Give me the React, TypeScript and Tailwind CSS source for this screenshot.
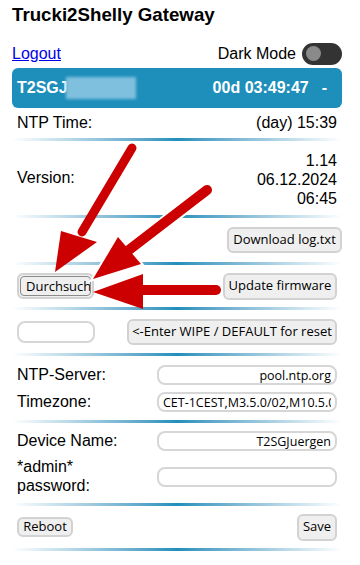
import React from 'react';

function Divider() {
  return <div className="h-[3px] bg-linear-to-r from-white via-[#1e8fbb] to-white" />;
}

function Btn({ children, className = '' }: { children: React.ReactNode; className?: string }) {
  return (
    <button
      className={`inline-flex items-center justify-center whitespace-nowrap rounded-[6px] border-2 border-[#d2d2d2] bg-[#efefef] px-[5px] font-['Open_Sans',sans-serif] text-[13px] text-black ${className}`}
    >
      {children}
    </button>
  );
}

function Field({ value = '' }: { value?: string }) {
  return (
    <input
      readOnly
      value={value}
      className="h-[20px] w-[180px] rounded-[8px] border-2 border-[#d6d6d6] bg-white px-[4px] text-right font-['Open_Sans',sans-serif] text-[12.5px] text-black outline-none"
    />
  );
}

function Arrows() {
  return (
    <svg className="pointer-events-none absolute left-0 top-0" width="360" height="565" viewBox="0 0 360 565">
      <g fill="#cc0000" stroke="white" strokeWidth="2" strokeLinejoin="miter" style={{ paintOrder: 'stroke' }}>
        {/* arrow 3 (horizontal) */}
        <line x1="216" y1="290" x2="135" y2="290" stroke="#cc0000" strokeWidth="10" strokeLinecap="round" />
        <polygon points="93,292 143,274 143,309" stroke="none" />
        {/* arrow 1 */}
        <line x1="132" y1="148" x2="82" y2="232" stroke="#cc0000" strokeWidth="9" strokeLinecap="round" />
        <polygon points="55,272 61,231 97,242" stroke="none" />
        {/* arrow 2 */}
        <line x1="207" y1="190" x2="128" y2="251" stroke="white" strokeWidth="14" strokeLinecap="round" />
        <polygon points="93,279 118,237 141,264" strokeWidth="4" />
        <line x1="207" y1="190" x2="125" y2="253" stroke="#cc0000" strokeWidth="10" strokeLinecap="round" />
      </g>
    </svg>
  );
}

export default function App() {
  return (
    <div className="relative min-h-[565px] w-[360px] bg-white font-['Liberation_Sans',Arial,sans-serif] text-[16px] text-black">
      <div className="pl-3 pr-[18px]">
        <h3 className="pt-[4px] text-[18.72px] font-bold leading-[21px]">Trucki2Shelly Gateway</h3>

        <div className="mt-[17px] flex h-[23px] items-center justify-between">
          <a href="#" className="text-[#0000ee] underline">
            Logout
          </a>
          <div className="flex items-center gap-[6px]">
            <span>Dark Mode</span>
            <div className="flex h-[22px] w-[40px] items-center rounded-full bg-[#333] px-[4px]">
              <div className="h-[15px] w-[15px] rounded-full bg-[#8a8a8a]" />
            </div>
          </div>
        </div>

        <div className="mt-[3px] flex h-[40px] items-center justify-between rounded-[6px] bg-[#1e8fbb] pl-[5px] pr-[15px] font-bold text-white">
          <div className="flex items-center">
            <span>T2SGJ</span>
            <span className="ml-[-2px] h-[22px] w-[70px] bg-[#80c0df] blur-[1.5px]" />
          </div>
          <div className="flex items-center gap-[13px]">
            <span>00d 03:49:47</span>
            <span>-</span>
          </div>
        </div>

        <div className="flex h-[30px] items-center justify-between px-[5px]">
          <span>NTP Time:</span>
          <span>(day) 15:39</span>
        </div>
        <Divider />

        <div className="flex h-[74px] items-center justify-between px-[5px]">
          <span>Version:</span>
          <div className="pt-[3px] text-right leading-[19px]">
            <div>1.14</div>
            <div>06.12.2024</div>
            <div>06:45</div>
          </div>
        </div>
        <Divider />

        <div className="flex h-[44px] items-center justify-end">
          <Btn className="h-[26px] w-[115px]">Download log.txt</Btn>
        </div>
        <Divider />

        <div className="flex h-[42px] items-center justify-between px-[5px]">
          <div className="flex h-[26px] w-[77px] items-center justify-center rounded-[6px] border-2 border-[#d2d2d2] bg-[#efefef]">
            <div className="h-[20px] w-[71px] overflow-hidden whitespace-nowrap rounded-[4px] border border-[#8a8a8a] bg-[#efefef] pl-[5px] font-['Open_Sans',sans-serif] text-[13px] leading-[18px]">
              Durchsuche
            </div>
          </div>
          <Btn className="h-[27px] w-[114px]">Update firmware</Btn>
        </div>
        <Divider />

        <div className="flex h-[43px] items-center justify-between px-[5px]">
          <input readOnly className="h-[22px] w-[78px] rounded-[8px] border-2 border-[#d6d6d6] bg-white outline-none" />
          <Btn className="h-[26px] w-[210px]">&lt;-Enter WIPE / DEFAULT for reset</Btn>
        </div>
        <Divider />

        <div className="flex flex-col gap-[7px] px-[5px] pb-[8px] pt-[9px]">
          <div className="flex h-[20px] items-center justify-between">
            <span>NTP-Server:</span>
            <Field value="pool.ntp.org" />
          </div>
          <div className="flex h-[20px] items-center justify-between">
            <span>Timezone:</span>
            <Field value="CET-1CEST,M3.5.0/02,M10.5.0/03" />
          </div>
        </div>
        <Divider />

        <div className="flex flex-col gap-[7px] px-[5px] pb-[8px] pt-[8px]">
          <div className="flex h-[20px] items-center justify-between">
            <span>Device Name:</span>
            <Field value="T2SGJuergen" />
          </div>
          <div className="flex items-center justify-between">
            <span className="leading-[18.5px]">
              *admin*
              <br />
              password:
            </span>
            <Field />
          </div>
        </div>
        <Divider />

        <div className="flex h-[42px] items-center justify-between px-[5px]">
          <Btn className="h-[20px] w-[56px]">Reboot</Btn>
          <Btn className="h-[27px] w-[40px]">Save</Btn>
        </div>
        <Divider />
      </div>
      <Arrows />
    </div>
  );
}
